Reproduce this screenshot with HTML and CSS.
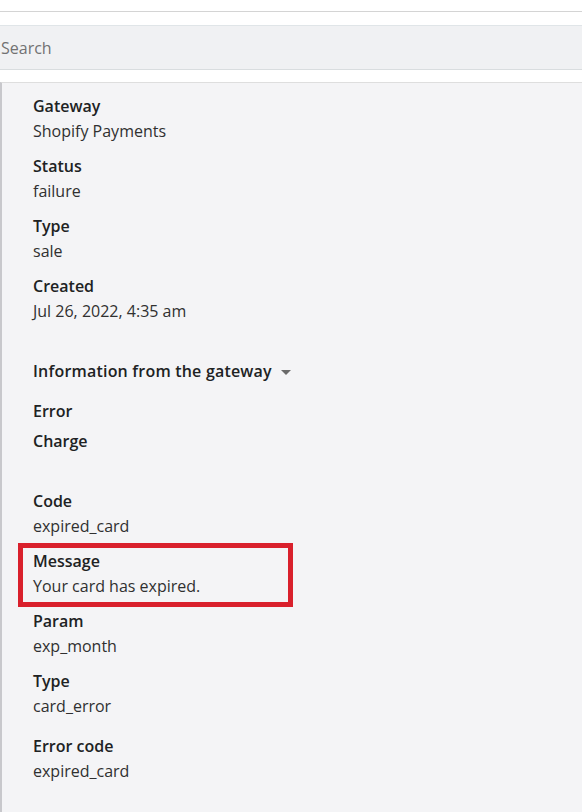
FILE: index.html
```html
<!DOCTYPE html>
<html lang="en">
<head>
<meta charset="utf-8">
<title>Transaction details</title>
<link rel="stylesheet" href="styles.css">
</head>
<body>
<div class="topbar"></div>
<div class="search-wrap">
  <div class="search">Search</div>
</div>
<main class="panel">
  <div class="field">
    <div class="label">Gateway</div>
    <div class="value">Shopify Payments</div>
  </div>
  <div class="field">
    <div class="label">Status</div>
    <div class="value">failure</div>
  </div>
  <div class="field">
    <div class="label">Type</div>
    <div class="value">sale</div>
  </div>
  <div class="field">
    <div class="label">Created</div>
    <div class="value">Jul 26, 2022, 4:35 am</div>
  </div>

  <div class="heading">Information from the gateway <span class="caret"></span></div>

  <div class="label sub">Error</div>
  <div class="label sub-gap">Charge</div>

  <div class="field">
    <div class="label">Code</div>
    <div class="value">expired_card</div>
  </div>
  <div class="field highlight">
    <div class="label">Message</div>
    <div class="value">Your card has expired.</div>
  </div>
  <div class="field">
    <div class="label">Param</div>
    <div class="value">exp_month</div>
  </div>
  <div class="field last-gap">
    <div class="label">Type</div>
    <div class="value">card_error</div>
  </div>
  <div class="field">
    <div class="label">Error code</div>
    <div class="value">expired_card</div>
  </div>
</main>
</body>
</html>
```

FILE: styles.css
```css
*, *::before, *::after { box-sizing: border-box; }

html, body {
  margin: 0;
  padding: 0;
  height: 100%;
}

body {
  background: #ffffff;
  font-family: "Open Sans", "Noto Sans", sans-serif;
  font-size: 16px;
  color: #303030;
  display: flex;
  flex-direction: column;
}

.topbar {
  height: 12px;
  border-bottom: 1px solid #d4d4d4;
}

.search-wrap {
  padding: 13px 0 12px;
}

.search {
  height: 45px;
  background: #f0f1f3;
  border-top: 1px solid #e0e5e8;
  border-bottom: 1px solid #d9dddf;
  display: flex;
  align-items: center;
  padding-left: 1px;
  font-size: 16px;
  color: #727272;
}

.panel {
  flex: 1;
  background: #f4f4f6;
  border-top: 1px solid #dedede;
  border-left: 2px solid #c8c8cc;
  padding: 11px 0 0 31px;
}

.field {
  margin-bottom: 10px;
}

.label {
  font-weight: 600;
  line-height: 25px;
  color: #202223;
}

.value {
  line-height: 25px;
  color: #303030;
}

.heading {
  margin-top: 35px;
  margin-bottom: 15px;
  line-height: 25px;
  font-weight: 600;
  letter-spacing: 0.2px;
  color: #202223;
  display: flex;
  align-items: center;
  gap: 9px;
}

.caret {
  width: 0;
  height: 0;
  border-left: 5px solid transparent;
  border-right: 5px solid transparent;
  border-top: 5px solid #6a6a6a;
  margin-top: 1px;
}

.sub {
  margin-bottom: 5px;
}

.sub-gap {
  margin-bottom: 35px;
}

.highlight {
  position: relative;
}

.highlight::after {
  content: "";
  position: absolute;
  left: -15px;
  top: -6px;
  width: 275px;
  height: 64px;
  border: 5px solid #d9202c;
  pointer-events: none;
}

.last-gap {
  margin-bottom: 15px;
}
```
